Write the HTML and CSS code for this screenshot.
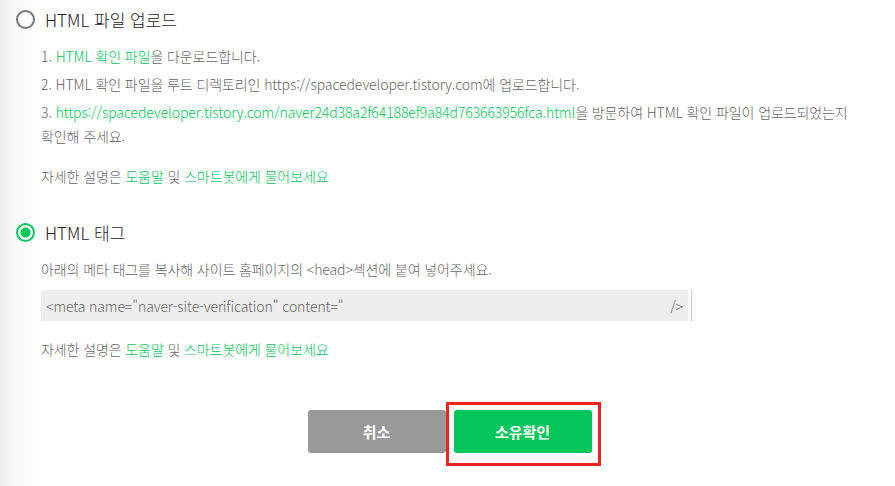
FILE: index.html
```html
<!DOCTYPE html>
<html lang="ko">
<head>
    <meta charset="UTF-8">
    <meta name="viewport" content="width=device-width, initial-scale=1.0">
    <title>소유확인</title>
    <link rel="stylesheet" href="styles.css">
</head>
<body>
    <div class="panel">
        <div class="option">
            <label class="option-title"><span class="radio"></span>HTML 파일 업로드</label>
            <div class="option-body">
                <p class="step">1. <a href="#">HTML 확인 파일</a>을 다운로드합니다.</p>
                <p class="step">2. HTML 확인 파일을 루트 디렉토리인 https://spacedeveloper.tistory.com에 업로드합니다.</p>
                <p class="step">3. <a href="#">https://spacedeveloper.tistory.com/naver24d38a2f64188ef9a84d763663956fca.html</a>을 방문하여 HTML 확인 파일이 업로드되었는지 확인해 주세요.</p>
                <p class="help">자세한 설명은 <a href="#">도움말</a> 및 <a href="#">스마트봇에게 물어보세요</a></p>
            </div>
        </div>

        <div class="option">
            <label class="option-title"><span class="radio checked"></span>HTML 태그</label>
            <div class="option-body">
                <p class="step">아래의 메타 태그를 복사해 사이트 홈페이지의 &lt;head&gt;섹션에 붙여 넣어주세요.</p>
                <div class="code-row">
                    <div class="code-box">
                        <span>&lt;meta name="naver-site-verification" content="</span>
                        <span>/&gt;</span>
                    </div>
                    <span class="caret"></span>
                </div>
                <p class="help">자세한 설명은 <a href="#">도움말</a> 및 <a href="#">스마트봇에게 물어보세요</a></p>
            </div>
        </div>

        <div class="actions">
            <button class="btn btn-cancel">취소</button>
            <button class="btn btn-ok">소유확인</button>
        </div>
    </div>
</body>
</html>
```

FILE: styles.css
```css
/* 기본 */
body {
    margin: 0;
    height: 486px;
    background: linear-gradient(to right, rgba(0, 0, 0, 0.07), rgba(0, 0, 0, 0.02) 18px, rgba(255, 255, 255, 0) 40px), #fff;
    font-family: "Noto Sans CJK KR", "Noto Sans", sans-serif;
    color: #666;
    overflow: hidden;
}

a {
    color: #03c75a;
    text-decoration: none;
}

.panel {
    padding: 8px 18px 0 16px;
}

/* 라디오 옵션 */
.option-title {
    display: flex;
    align-items: center;
    height: 22px;
    font-size: 17px;
    font-weight: 300;
    color: #222;
}

.radio {
    box-sizing: border-box;
    width: 19px;
    height: 19px;
    margin-right: 10px;
    border: 2px solid #777;
    border-radius: 50%;
}

.radio.checked {
    border-color: #03c75a;
    background: radial-gradient(circle, #03c75a 0 4.5px, #fff 5.5px);
}

.option-body {
    padding-left: 25px;
    font-size: 14px;
    font-weight: 300;
    letter-spacing: -0.1px;
    word-break: keep-all;
}

.step {
    margin: 14px 0 0;
    line-height: 24px;
}

.option:first-child .step + .step {
    margin-top: 4px;
}

.help {
    margin: 16px 0 0;
    line-height: 24px;
}

.option + .option {
    margin-top: 33px;
}

/* 메타 태그 */
.code-row {
    display: flex;
    align-items: stretch;
    margin-top: 9px;
}

.code-box {
    display: flex;
    justify-content: space-between;
    align-items: center;
    width: 647px;
    height: 31px;
    box-sizing: border-box;
    padding: 0 5px;
    background-color: #eee;
    color: #666;
}

.caret {
    width: 1px;
    margin-left: 3px;
    background-color: #f4c4c4;
}

/* 버튼 */
.actions {
    display: flex;
    justify-content: center;
    gap: 8px;
    margin-top: 49px;
    padding-left: 6px;
}

.btn {
    position: relative;
    width: 138px;
    height: 43px;
    border: none;
    border-radius: 3px;
    color: #fff;
    font-family: inherit;
    font-size: 15px;
    font-weight: bold;
}

.btn-cancel {
    background-color: #999;
}

.btn-ok {
    background-color: #03c75a;
}

/* 강조 표시 */
.btn-ok::after {
    content: "";
    position: absolute;
    top: -8px;
    left: -8px;
    right: -9px;
    bottom: -13px;
    border: 3px solid #f0231e;
}
```
